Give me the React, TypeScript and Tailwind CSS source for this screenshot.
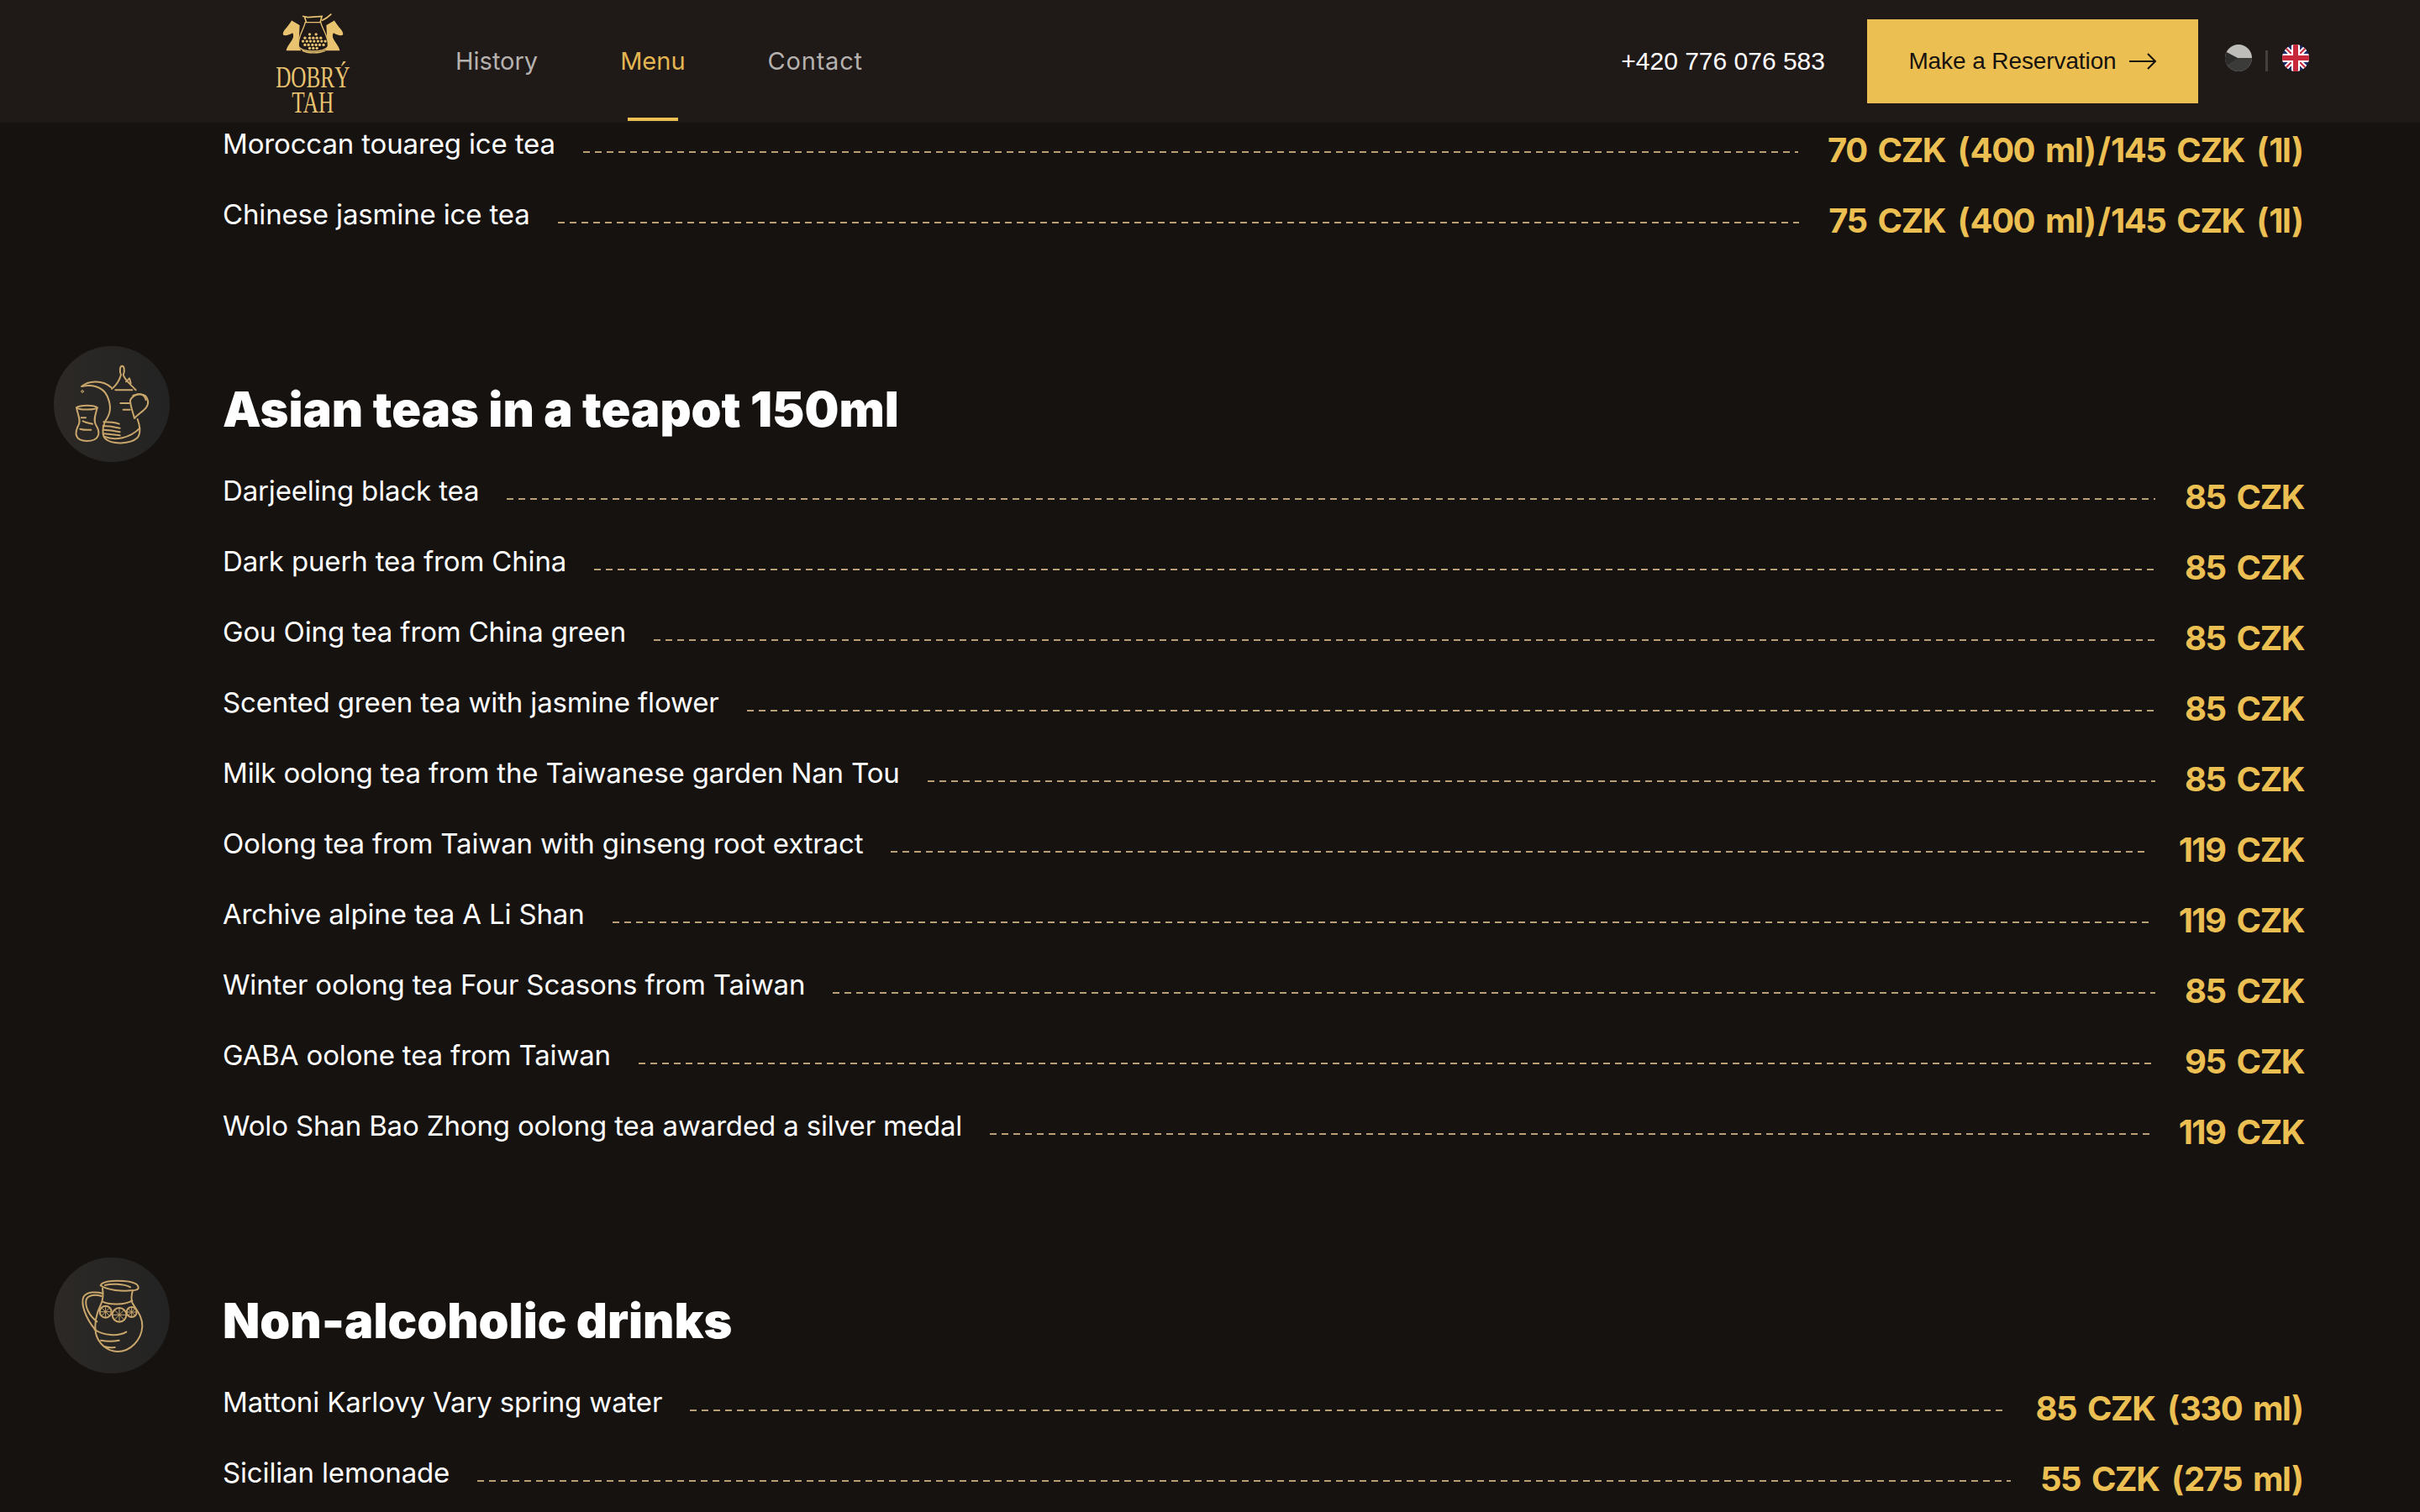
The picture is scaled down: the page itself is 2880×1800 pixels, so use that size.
const sections = [
  {
    icon: "teapot",
    title: "Asian teas in a teapot 150ml",
    items: [
      ["Darjeeling black tea", "85 CZK"],
      ["Dark puerh tea from China", "85 CZK"],
      ["Gou Oing tea from China green", "85 CZK"],
      ["Scented green tea with jasmine flower", "85 CZK"],
      ["Milk oolong tea from the Taiwanese garden Nan Tou", "85 CZK"],
      ["Oolong tea from Taiwan with ginseng root extract", "119 CZK"],
      ["Archive alpine tea A Li Shan", "119 CZK"],
      ["Winter oolong tea Four Scasons from Taiwan", "85 CZK"],
      ["GABA oolone tea from Taiwan", "95 CZK"],
      ["Wolo Shan Bao Zhong oolong tea awarded a silver medal", "119 CZK"],
    ],
  },
  {
    icon: "jug",
    title: "Non-alcoholic drinks",
    items: [
      ["Mattoni Karlovy Vary spring water", "85 CZK (330 ml)"],
      ["Sicilian lemonade", "55 CZK (275 ml)"],
    ],
  },
];

const iceTeas = [
  ["Moroccan touareg ice tea", "70 CZK (400 ml)/145 CZK (1l)"],
  ["Chinese jasmine ice tea", "75 CZK (400 ml)/145 CZK (1l)"],
];

function Logo() {
  const dots = [
    [262, 105], [285, 105],
    [245, 118], [262, 118], [275, 118], [288, 118], [302, 118],
    [238, 130], [252, 130], [265, 130], [278, 130], [292, 130], [305, 130], [318, 130],
    [245, 143], [258, 143], [272, 143], [285, 143], [298, 143], [312, 143],
    [262, 155], [275, 155], [288, 155],
  ];
  return (
    <svg viewBox="165 30 218 145" className="w-[73px] h-[48px]">
      {/* left and right knights */}
      <path fill="#e9c36f" d="M198 55 C200 58 205 60 208 62 L226 72 L222 150 L232 164 L178 164 C178 150 195 135 202 118 C204 110 204 104 200 100 C190 106 175 112 168 108 C162 104 170 90 180 80 C186 72 192 64 198 55Z" />
      <path fill="#e9c36f" d="M350 55 C348 58 343 60 340 62 L322 72 L326 150 L316 164 L370 164 C370 150 353 135 346 118 C344 110 344 104 348 100 C358 106 373 112 380 108 C386 104 378 90 368 80 C362 72 356 64 350 55Z" />
      {/* kettle */}
      <path fill="#1f1918" stroke="#e9c36f" strokeWidth="4" d="M246 62 H302 C306 85 332 115 328 148 C318 172 232 172 222 148 C218 115 242 85 246 62Z" />
      <path fill="none" stroke="#e9c36f" strokeWidth="5" d="M236 40 L256 44 L306 40 L300 62 M250 62 L244 44 M306 56 C318 50 330 42 340 32" />
      <path fill="none" stroke="#e9c36f" strokeWidth="4" d="M236 164 C255 174 295 174 318 164" />
      {dots.map(([x, y], i) => (
        <circle key={i} cx={x} cy={y} r="5" fill="#e9c36f" />
      ))}
    </svg>
  );
}

function TeapotIcon() {
  return (
    <svg viewBox="72 69 414 414" className="w-full h-full" fill="none" stroke="#c9a66b" strokeWidth="6" strokeLinecap="round" strokeLinejoin="round">
      {/* cup */}
      <path d="M153 289 C165 280 215 278 227 289 C222 296 165 300 153 289Z" />
      <path d="M153 289 C158 315 170 335 160 352 C146 378 146 408 190 408 C236 408 240 378 222 350 C212 332 222 312 227 289" />
      <path d="M170 325 H186 M176 337 C186 342 196 344 210 347 M166 365 C180 369 192 369 205 368" />
      <circle cx="174" cy="231" r="4" strokeWidth="3" />
      {/* spout and body */}
      <path d="M172 213 C192 194 245 186 277 217" />
      <path d="M172 213 C205 205 245 212 262 246 C276 276 276 305 262 327 C245 350 243 388 256 400 C280 422 345 420 370 397 C384 380 380 355 371 330" />
      <path d="M252 392 C290 408 345 398 379 362" />
      <path d="M250 340 C270 340 290 342 305 347 M248 354 C270 354 292 358 308 362 M250 368 C270 368 292 372 308 376 M252 382 C270 384 290 386 308 388" />
      {/* lid */}
      <path d="M279 222 C298 208 306 192 312 172 C306 158 308 140 316 140 C324 140 326 158 320 172 C326 192 345 204 365 226" />
      <path d="M292 226 H352 M330 196 L342 184 L347 202" />
      <path d="M310 273 H342 M320 296 H344" />
      {/* handle */}
      <path d="M345 262 C362 232 402 234 408 264 C414 292 378 305 360 327 C355 305 345 285 345 262Z" />
      <path d="M355 246 C378 236 395 240 401 262" />
    </svg>
  );
}

function Lemon({ cx, cy, r }: { cx: number; cy: number; r: number }) {
  return (
    <g>
      <circle cx={cx} cy={cy} r={r} />
      <path strokeWidth="3" d={`M${cx - r} ${cy} H${cx + r} M${cx} ${cy - r} V${cy + r} M${cx - r * 0.7} ${cy - r * 0.7} L${cx + r * 0.7} ${cy + r * 0.7} M${cx + r * 0.7} ${cy - r * 0.7} L${cx - r * 0.7} ${cy + r * 0.7}`} />
    </g>
  );
}

function JugIcon() {
  return (
    <svg viewBox="72 54 414 414" className="w-full h-full" fill="none" stroke="#c9a66b" strokeWidth="6" strokeLinecap="round" strokeLinejoin="round">
      <path d="M239 154 C245 140 280 135 320 138 C350 140 372 148 374 160 C376 170 358 172 348 172 C320 175 262 172 239 154Z" />
      <path d="M255 153 C275 147 320 147 345 160" />
      <path d="M246 165 C250 190 248 205 240 222 C226 250 216 290 222 325 C230 360 262 390 300 390 C345 390 385 350 388 300 C390 265 365 240 352 215 C347 200 350 185 354 172" />
      <path d="M246 212 C270 224 325 224 352 208" />
      <path d="M246 182 C225 176 190 175 178 195 C168 220 185 270 220 312" />
      <path d="M242 192 C222 184 195 188 188 204 C182 228 198 262 226 283" />
      <path d="M218 312 C250 332 300 338 331 320 M240 350 C260 354 285 354 305 350 M252 372 C262 376 278 376 290 375" />
      <Lemon cx={257} cy={248} r={21} />
      <Lemon cx={306} cy={259} r={25} />
      <Lemon cx={350} cy={249} r={18} />
    </svg>
  );
}

function Row({ name, price }: { name: string; price: string }) {
  return (
    <div className="flex h-[84px] items-center">
      <span className="mt-[1px] whitespace-nowrap text-[33px] font-normal text-white font-['Inter',sans-serif] tracking-[-0.15px]">{name}</span>
      <div className="ml-[33px] mr-[35px] mt-[20px] h-[2px] flex-1 bg-[repeating-linear-gradient(90deg,#b89f75_0_8px,transparent_8px_14px)]"></div>
      <span className="mt-[16px] whitespace-nowrap font-['Inter',sans-serif] text-[40px] font-bold tracking-[-1.5px] [word-spacing:5px] text-[#ecbf52]">
        {/* brackets and the slash sit wider than the digits */}
        {price.split(/([()/])/).map((part, i) =>
          i % 2 === 1 ? (
            <span key={i} className="mx-[1.5px]">{part}</span>
          ) : (
            part
          )
        )}
      </span>
    </div>
  );
}

export default function App() {
  return (
    <div className="flex h-[1800px] w-full flex-col overflow-hidden bg-[#161210]">
      <header className="relative z-10 flex h-[146px] shrink-0 items-center bg-[#1f1918] pl-[329px] pr-[132px]">
        <div className="flex w-[86px] flex-col items-center">
          <Logo />
          <div className="mt-[14px] h-[53px] text-center font-['Liberation_Serif',serif] text-[35px] leading-[30px] font-medium whitespace-nowrap text-[#e9c36f] scale-x-[0.72]">
            <div>DOBRÝ</div>
            <div>TAH</div>
          </div>
        </div>
        <nav className="ml-[127px] flex h-full items-center gap-[98px] font-['Inter',sans-serif] text-[29px] text-[#b5b1ae]">
          <a>History</a>
          <a className="relative flex h-full items-center text-[#e4b651]">
            Menu
            <span className="absolute bottom-[2px] left-[9px] h-[4px] w-[60px] bg-[#ecbf52]"></span>
          </a>
          <a className="tracking-[0.8px]">Contact</a>
        </nav>
        <div className="ml-auto flex items-center">
          <span className="mb-[2px] font-['Liberation_Sans',sans-serif] text-[30px] text-white">+420 776 076 583</span>
          <button className="ml-[50px] flex h-[100px] w-[394px] items-center justify-center gap-[15px] bg-[#ecbf52] font-['Liberation_Sans',sans-serif] text-[28px] tracking-[-0.1px] text-[#16120f]">
            Make a Reservation
            <svg width="33" height="20" viewBox="0 0 33 20" fill="none" stroke="#16120f" strokeWidth="2">
              <path d="M0 10 H31 M22 1 L31 10 L22 19" />
            </svg>
          </button>
          <div className="ml-[32px] mb-[8px] flex items-center">
            <svg viewBox="0 0 32 32" className="h-[32px] w-[32px]">
              <clipPath id="cz"><circle cx="16" cy="16" r="16" /></clipPath>
              <g clipPath="url(#cz)">
                <rect width="32" height="32" fill="#bfbdba" />
                <rect y="16" width="32" height="16" fill="#3b3b39" />
                <path d="M0 8 L15 16 L0 26Z" fill="#2c2c2a" />
              </g>
            </svg>
            <div className="ml-[16px] mr-[17px] mt-[6px] h-[25px] w-[3px] bg-[#463f3e]"></div>
            <svg viewBox="0 0 32 32" className="h-[32px] w-[32px]">
              <clipPath id="uk"><circle cx="16" cy="16" r="16" /></clipPath>
              <g clipPath="url(#uk)">
                <rect width="32" height="32" fill="#1d2f6f" />
                <path d="M0 0 L32 32 M32 0 L0 32" stroke="#ffffff" strokeWidth="6" />
                <path d="M0 0 L32 32 M32 0 L0 32" stroke="#c8283c" strokeWidth="2" />
                <path d="M16 0 V32 M0 16 H32" stroke="#ffffff" strokeWidth="10" />
                <path d="M16 0 V32 M0 16 H32" stroke="#c8283c" strokeWidth="6" />
              </g>
            </svg>
          </div>
        </div>
      </header>

      <main className="-mt-[17px] pl-[64px] pr-[138px]">
        <div className="pl-[201px]">
          {iceTeas.map(([name, price]) => (
            <Row key={name} name={name} price={price} />
          ))}
        </div>

        {sections.map((section) => (
          <section key={section.title} className="mt-[115px] flex gap-[63px]">
            <div className="h-[138px] w-[138px] shrink-0 overflow-hidden rounded-full bg-gradient-to-r from-[#2c2926] to-[#232323]">
              {section.icon === "teapot" ? <TeapotIcon /> : <JugIcon />}
            </div>
            <div className="min-w-0 flex-1 pt-[31px]">
              <h2 className="mb-[11px] h-[88px] text-[57.6px] leading-[88px] font-black text-white font-['Inter',sans-serif]">{section.title}</h2>
              {section.items.map(([name, price]) => (
                <Row key={name} name={name} price={price} />
              ))}
            </div>
          </section>
        ))}
      </main>
    </div>
  );
}
